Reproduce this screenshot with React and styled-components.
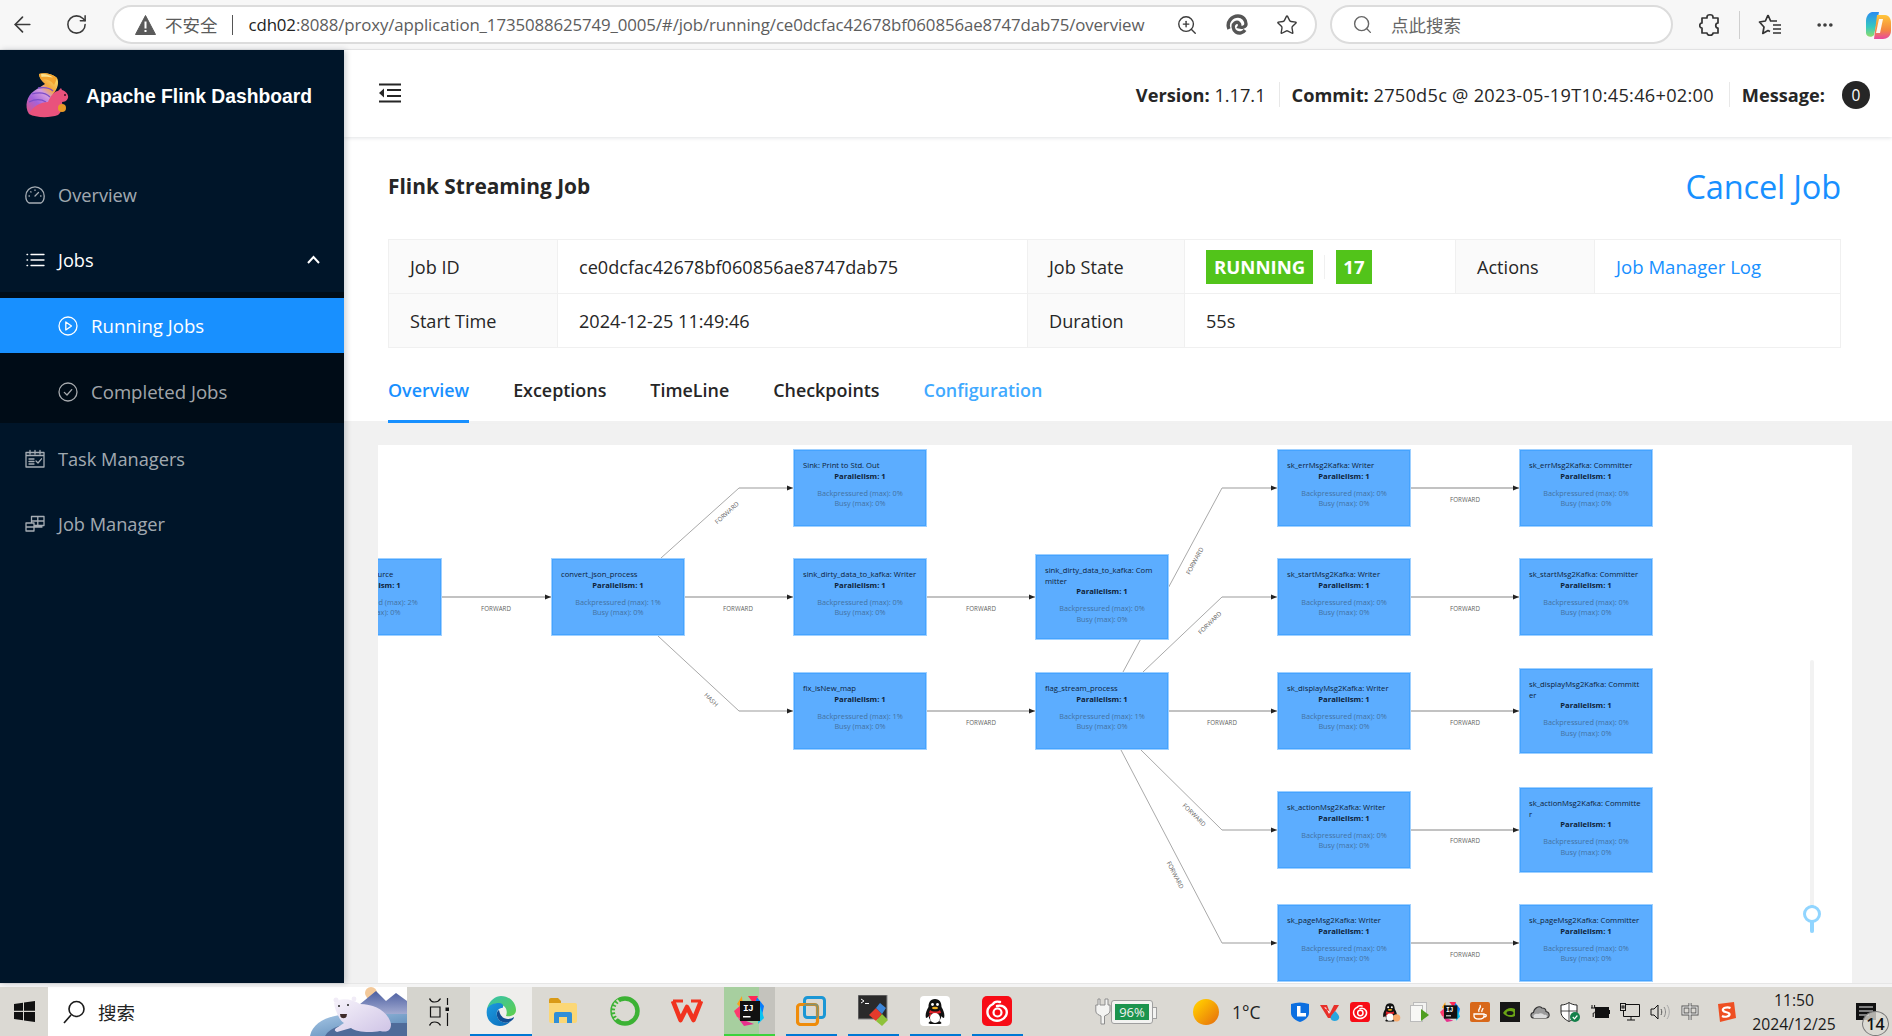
import React from "react";
import styled, { createGlobalStyle } from "styled-components";
import { ArrowLeft, RotateCw, ZoomIn, Star, Search, MoreHorizontal } from "lucide-react";

const UI = `"Open Sans", "Noto Sans CJK SC", sans-serif`;
const CJK = `"Noto Sans CJK SC", sans-serif`;

const Global = createGlobalStyle`
  html, body { margin: 0; padding: 0; height: 100%; overflow: hidden; background: #fff; }
  * { box-sizing: border-box; }
  #root { height: 1036px; }
`;

const Page = styled.div`
  width: 1892px; height: 1036px; display: flex; flex-direction: column; overflow: hidden;
  font-family: ${UI}; color: #262626; background: #fff;
`;

/* ---------- browser chrome ---------- */
const BrowserBar = styled.div`
  height: 50px; flex: none; background: #f7f7f7; display: flex; align-items: center; position: relative;
  border-bottom: 1px solid #e9e9e9; color: #333;
`;
const ChromeBtn = styled.span`
  flex: none; width: ${p => p.$w || 32}px; margin-left: ${p => p.$ml || 0}px; display: flex; align-items: center; justify-content: center; color: #3b3b3b;
`;
const AddressPill = styled.div`
  flex: none; width: 1205px; height: 39px; margin-left: 23px; background: #fff; border: 2px solid #dcdcdc; border-radius: 20px;
  display: flex; align-items: center; padding-left: 21px;
`;
const Insecure = styled.span`
  margin-left: 9px; font-family: ${CJK}; font-size: 17.5px; color: #5b5b5b; letter-spacing: 0;
`;
const AddrSep = styled.span`
  width: 1px; height: 20px; background: #555; margin: 0 16px 0 14px;
`;
const Url = styled.span`
  flex: none; width: 895px; font-size: 16.85px; color: #5d5d5d; white-space: nowrap; letter-spacing: -.12px;
  & b { font-weight: 400; color: #222; }
`;
const SearchPill = styled.div`
  flex: none; width: 343px; height: 39px; margin-left: 13px; background: #fff; border: 2px solid #dcdcdc; border-radius: 20px;
  display: flex; align-items: center; padding-left: 20px; font-family: ${CJK}; font-size: 17.5px; color: #666;
  & span { margin-left: 18px; }
`;
const ChromeDivider = styled.span`
  flex: none; width: 1px; height: 28px; background: #cfcfcf; margin-left: ${p => p.$ml}px;
`;

/* ---------- layout ---------- */
const Body = styled.div`
  flex: none; height: 933px; display: flex;
`;
const Sidebar = styled.aside`
  flex: none; width: 344px; background: #001529; color: rgba(255,255,255,.65); position: relative; z-index: 2;
  box-shadow: 2px 0 6px rgba(0,21,41,.2); display: flex; flex-direction: column;
`;
const Brand = styled.div`
  height: 92px; flex: none; display: flex; align-items: center; padding-left: 20px;
  & svg { margin-bottom: 8px; }
  & h1 { margin: 2px 0 0 10px; font: 700 19.3px "Liberation Sans", Arial, sans-serif; color: #fff; white-space: nowrap; }
`;
const Menu = styled.nav`
  margin-top: 25px; display: flex; flex-direction: column;
`;
const MenuItem = styled.div`
  height: 55px; flex: none; display: flex; align-items: center; padding-left: 25px; font-size: 18.2px;
  color: ${p => (p.$on ? "#fff" : "rgba(255,255,255,.65)")};
  margin-bottom: ${p => p.$mb ?? 10}px;
  & > svg:first-child { margin-right: 13px; flex: none; }
`;
const Chevron = styled.span`
  margin-left: auto; margin-right: 24px; display: flex;
`;
const SubMenu = styled.div`
  background: #000c17; padding-top: 6px; display: flex; flex-direction: column; height: 131px; flex: none; margin-bottom: 8px;
`;
const SubItem = styled.div`
  height: 55px; flex: none; display: flex; align-items: center; padding-left: 58px; font-size: 18.6px; margin-bottom: 11px;
  background: ${p => (p.$on ? "#1890ff" : "transparent")};
  color: ${p => (p.$on ? "#fff" : "rgba(255,255,255,.65)")};
  & svg { margin-right: 13px; flex: none; }
`;
const Main = styled.main`
  flex: 1; min-width: 0; display: flex; flex-direction: column; background: #f1f1f1; position: relative;
`;
const Header = styled.header`
  flex: none; height: 87px; background: #fff; box-shadow: 0 1px 4px rgba(0,21,41,.12); position: relative; z-index: 1;
  display: flex; align-items: center; padding: 0 22px 0 34px;
`;
const FoldWrap = styled.span`
  display: flex; margin-bottom: 2px;
`;
const StatusGroup = styled.div`
  margin-left: auto; display: flex; align-items: center; font-size: 18.2px; color: #262626; white-space: nowrap; padding-top: 2px;
  & b { font-weight: 700; }
`;
const CommitValue = styled.span`
  letter-spacing: .26px;
`;
const StatusDivider = styled.span`
  width: 1px; height: 25px; background: #e8e8e8; margin: 0 12px 0 ${p => p.$left}px;
`;
const Badge = styled.span`
  width: 28px; height: 28px; margin-left: 17px; border-radius: 50%; background: #262626; color: #fff; font-size: 15.5px;
  display: flex; align-items: center; justify-content: center;
`;
const JobPanel = styled.section`
  flex: none; height: 284px; background: #fff; padding: 0 51px 0 44px; display: flex; flex-direction: column;
`;
const TitleRow = styled.div`
  height: 102px; flex: none; display: flex; align-items: center; justify-content: space-between;
  & h2 { margin: 0 0 4px; font-size: 20.9px; font-weight: 700; color: #262626; }
`;
const CancelLink = styled.a`
  font-size: 32.6px; color: #1890ff; margin-bottom: 3px; letter-spacing: -.2px;
`;
const InfoTable = styled.div`
  display: grid; grid-template-columns: 169px 470px 157px 271px 139px 1fr; grid-template-rows: 54px 53px;
  border: 1px solid #f0f0f0; font-size: 18.1px; flex: none;
`;
const LabelCell = styled.div`
  background: #fafafa; display: flex; align-items: center; padding-left: 21px;
  border-right: 1px solid #f0f0f0; border-bottom: ${p => (p.$last ? 0 : "1px solid #f0f0f0")};
`;
const ValueCell = styled.div`
  display: flex; align-items: center; padding-left: 21px; grid-column: span ${p => p.$span || 1};
  border-right: ${p => (p.$end ? 0 : "1px solid #f0f0f0")}; border-bottom: ${p => (p.$last ? 0 : "1px solid #f0f0f0")};
`;
const StateTag = styled.span`
  height: 34px; padding: 0 ${p => p.$pad}px; background: #52c41a; color: #fff; font-weight: 700; font-size: 18.6px; display: flex; align-items: center;
`;
const TagGap = styled.span`
  width: 1px; height: 24px; background: #f0f0f0; margin: 0 11px;
`;
const LogLink = styled.a`
  color: #1890ff; font-size: 18.6px;
`;
const Tabs = styled.div`
  flex: 1; display: flex; gap: 44px; border-bottom: 1px solid #f0f0f0;
`;
const Tab = styled.div`
  height: 75px; display: flex; align-items: center; font-size: 17.9px; font-weight: 600; padding-top: 11px;
  color: ${p => p.$color || "#262626"};
  border-bottom: ${p => (p.$on ? "3px solid #1890ff" : "3px solid transparent")};
`;
const GraphArea = styled.div`
  flex: 1; min-height: 0; padding: 24px 40px 0 34px; display: flex;
`;
const Canvas = styled.div`
  flex: 1; position: relative; background: #fff; overflow: hidden;
`;
const EdgeLayer = styled.svg`
  position: absolute; left: 0; top: 0; width: 1474px; height: 538px;
`;
const EdgeLabel = styled.text`
  font-family: ${UI}; font-size: 6.2px; fill: #5f5f5f;
`;
const Node = styled.div`
  position: absolute; width: 134px; background: #5cadff; border: 1px solid #9fd0ff; box-shadow: inset 0 0 0 1px #45a3ff;
  padding: 10px 9px 0; font-size: 7.7px; line-height: 10.6px; text-align: center; color: #0e2238; overflow: hidden;
`;
const NodeTitle = styled.div`
  text-align: left; white-space: pre-line;
`;
const NodeParallel = styled.div`
  font-weight: 700; margin-bottom: 6.5px; white-space: nowrap;
`;
const NodeMuted = styled.div`
  color: #44729f; white-space: nowrap; font-size: 7.3px;
`;
const SliderTrack = styled.div`
  position: absolute; left: 1432px; top: 215px; width: 4px; height: 273px; background: #f2f2f2; border-radius: 2px;
`;
const SliderFill = styled.div`
  position: absolute; left: 0; bottom: 0; width: 4px; height: 28px; background: #91d5ff; border-radius: 2px;
`;
const SliderHandle = styled.div`
  position: absolute; left: -7px; top: 245px; width: 18px; height: 18px; border-radius: 50%; background: #fff; border: 3px solid #91d5ff;
`;
const Strip = styled.div`
  flex: none; height: 4px; background: #f4f4f4; border-top: 1px solid #e6e6e6;
`;

/* ---------- taskbar ---------- */
const Taskbar = styled.footer`
  flex: none; height: 49px; background: #dbd9d3; display: flex; align-items: center; position: relative; color: #111;
  & > * { flex: none; }
`;
const StartBtn = styled.div`
  width: 48px; height: 100%; display: flex; align-items: center; justify-content: center;
`;
const TaskSearch = styled.div`
  width: 359px; height: 100%; background: #fff; display: flex; align-items: center; padding-left: 14px; font-family: ${CJK}; font-size: 18.5px; color: #222;
  & span { margin-left: 12px; }
  & svg:last-child { margin-left: auto; }
`;
const TaskView = styled.div`
  width: 63px; height: 100%; display: flex; align-items: center; justify-content: center; background: #d5d4ce;
`;
const TileSlot = styled.div`
  width: 62px; height: 100%; padding: 0 ${p => (p.$full ? 0 : 5.5)}px;
`;
const Tile = styled.div`
  height: 100%; display: flex; align-items: center; justify-content: center; position: relative; background: ${p => p.$bg || "transparent"};
  border-bottom: 2px solid ${p => p.$line || "transparent"};
`;
const TileHalf = styled.div`
  position: absolute; right: 0; top: 0; bottom: 0; width: 16px; background: #c4c3bd;
`;
const IconOver = styled.span`
  position: relative; display: flex;
`;
const Power = styled.div`
  margin-left: 67px; display: flex; align-items: center;
`;
const BatteryBody = styled.div`
  width: 42px; height: 24px; background: #f3f3f1; border: 1px solid #9f9f9f; border-radius: 3px; padding: 3px; margin-right: 3px; position: relative;
  & div { height: 100%; background: #1c944e; color: #f2f2f2; font-size: 13px; line-height: 16px; text-align: center; }
  &::after { content: ""; position: absolute; right: -5px; top: 6px; width: 3px; height: 10px; background: #f3f3f1; border: 1px solid #9f9f9f; border-left: 0; }
`;
const Weather = styled.div`
  margin-left: 37px; width: 69px; display: flex; align-items: center; font-size: 17.5px; color: #222; white-space: nowrap;
  & i { display: block; flex: none; width: 26px; height: 26px; border-radius: 50%; background: linear-gradient(135deg, #ffc400 20%, #e8760c 90%); margin-right: 13px; }
`;
const Tray = styled.div`
  margin-left: 23px; display: flex; align-items: center;
`;
const TraySlot = styled.div`
  width: 30px; flex: none; display: flex; align-items: center; justify-content: center; margin-left: ${p => p.$ml || 0}px;
`;
const Clock = styled.div`
  margin-left: 8px; width: 90px; display: flex; flex-direction: column; align-items: center; font-size: 15.7px; line-height: 24px; color: #1a1a1a;
`;
const Notify = styled.div`
  margin-left: 14px; width: 36px; height: 100%; position: relative;
  & > svg { position: absolute; left: 3px; top: 16px; }
`;
const NotifyCount = styled.span`
  position: absolute; left: 9px; top: 24px; width: 27px; height: 25px; border-radius: 50%; border: 1px solid #777; background: #dbd9d3cc; color: #111;
  font-size: 16px; font-weight: 600; display: flex; align-items: center; justify-content: center;
`;

/* ---------- icons ---------- */
const Warn = () => (
  <svg width="21" height="20" viewBox="0 0 21 20"><path d="M10.5 0.5 L20.5 19.5 H0.5 Z" fill="#5a5a5a" stroke="#5a5a5a" strokeLinejoin="round" /><rect x="9.5" y="6.5" width="2" height="7" fill="#fff" /><rect x="9.5" y="15" width="2" height="2" fill="#fff" /></svg>
);
const EdgeMini = () => (
  <svg width="22" height="22" viewBox="0 0 22 22" fill="none" stroke="#555"><path d="M3 15 C0 8 6 2 12 2 C17 2 20 6 20 10 C20 13 16 14 13 13 C15 10 12 7 9 9 C6 11 7 16 10 18 C13 20 17 19 19 16" strokeWidth="3.4" /></svg>
);
const PuzzleIcon = () => (
  <svg width="22" height="24" viewBox="0 0 22 24" fill="none" stroke="#333" strokeWidth="1.7" strokeLinejoin="round"><path d="M8 4 C8 1 14 1 14 4 V5 H19 V10 C16 10 16 15 19 15 V20 H14 C14 23 8 23 8 20 H3 V15 C0 15 0 10 3 10 V5 H8 Z" /></svg>
);
const FavIcon = () => (
  <svg width="24" height="24" viewBox="0 0 24 24" fill="none" stroke="#333" strokeWidth="1.7" strokeLinejoin="round"><path d="M10 2 L12.6 8 H19 M10 2 L7.4 8 L1.5 9 L6 14 L4.8 20.5 L10 17.5 L12 18.6 M15 12 H23 M15 16 H23 M15 20 H23" /></svg>
);
const Copilot = () => (
  <svg width="26" height="28" viewBox="0 0 26 28"><defs><linearGradient id="cop" x1="0" y1="0" x2="0" y2="1"><stop offset="0" stopColor="#2a8cf0" /><stop offset=".6" stopColor="#36c8c0" /><stop offset="1" stopColor="#8fdc6a" /></linearGradient><linearGradient id="cop2" x1="0" y1="0" x2="0" y2="1"><stop offset="0" stopColor="#ffc53a" /><stop offset=".6" stopColor="#f58a3c" /><stop offset="1" stopColor="#e848a0" /></linearGradient></defs><path d="M7 1 H14 L9 24 C7 27 1 26 1 22 V10 C1 6 3 2 7 1 Z" fill="url(#cop)" /><path d="M12 4 H20 C24 4 26 8 26 12 V20 C26 25 22 28 18 28 H9 Z" fill="url(#cop2)" /><path d="M14 8 L11 22 H15 L18 8 Z" fill="#fff" opacity=".92" /></svg>
);
const FlinkLogo = () => (
  <svg width="56" height="56" viewBox="0 0 56 56">
    <defs>
      <linearGradient id="tail" x1="0" y1="1" x2=".7" y2="0"><stop offset="0" stopColor="#e8507a" /><stop offset=".35" stopColor="#a263dc" /><stop offset=".6" stopColor="#d39ae0" /><stop offset=".78" stopColor="#f4a83a" /><stop offset="1" stopColor="#f7d86a" /></linearGradient>
    </defs>
    <path d="M9 50 C4 42 7 32 14 27 C18 24 22 22 25 20 C21 17 19 13 19 10 C24 8 33 10 37 14 C39 18 38 24 34 29 C30 35 28 40 26 45 Z" fill="url(#tail)" />
    <path d="M19 10 C24 8 33 10 37 14 C36 17 35 19 34 21 C31 16 25 14 22 16 C20 14 19 12 19 10 Z" fill="#f3a52f" />
    <path d="M21 10 C25 9.5 30 11 33 13.5 C28 12.5 24 12.5 21.5 13 Z" fill="#fbe28e" />
    <path d="M12 30 C19 28 26 29 30 33 M9 38 C15 35 21 35 26 38 M18 24 C24 23 30 24 33 27" stroke="#7d4ec8" strokeWidth="1.3" fill="none" />
    <path d="M9 50 C13 42 21 38 28 38 C30 33 34 27 38 27 L41 24 L42 26 C46 27 49 31 48 34 C47 37 44 38 42 38 C43 42 42 48 38 51 C30 54 16 54 9 50 Z" fill="#e9527c" />
    <circle cx="42" cy="44" r="4" fill="#e99a28" /><circle cx="45" cy="31" r="1" fill="#3b0f20" />
  </svg>
);
const NavSvg = ({ children, w = 20, color = "currentColor" }) => (
  <svg width={w} height="20" viewBox="0 0 20 20" fill="none" stroke={color} strokeWidth="1.3" strokeLinecap="round" strokeLinejoin="round">{children}</svg>
);
const GaugeIco = () => <NavSvg><path d="M4 18 C1.5 16.5 .8 13.5 .8 11 a9.2 9.2 0 0 1 18.4 0 C19.2 13.5 18.5 16.5 16 18 Z" /><path d="M10 11 L13.5 7.5" /><path d="M4 11 H4.4 M5.8 6.8 L6 7 M10 5 V5.4 M16 11 H15.6" /></NavSvg>;
const ListIco = () => <NavSvg><path d="M6 4.5 H19 M6 10 H19 M6 15.5 H19 M2 4.5 H2.6 M2 10 H2.6 M2 15.5 H2.6" /></NavSvg>;
const PlayIco = () => <NavSvg><circle cx="10" cy="10" r="9" /><path d="M7.8 6 L13.5 10 L7.8 14 Z" /></NavSvg>;
const CheckIco = () => <NavSvg><circle cx="10" cy="10" r="9" /><path d="M6.3 10.4 L9 13 L13.7 7.6" /></NavSvg>;
const ScheduleIco = () => <NavSvg><path d="M1 3.5 H19 V18 H1 Z M5 1.5 V5 M10 1.5 V5 M15 1.5 V5 M1 6.5 H19 M4 10 H9 M4 12.5 H9 M4 15 H9 M11 12 L13 14 L16.5 9.8" /></NavSvg>;
const ClusterIco = () => <NavSvg><path d="M1 9 H9 V17 H1 Z M1 13 H17 M9 9 V17 M6.5 9 V2.5 H19 V11.5 H9 M12.8 2.5 V11.5 M6.5 7 H19" /></NavSvg>;
const FoldIco = () => (
  <svg width="24" height="20" viewBox="0 0 24 20" fill="none" stroke="#262626" strokeWidth="2.2"><path d="M1 1.5 H23 M9 7 H23 M9 13 H23 M1 18.5 H23" /><path d="M6 5.5 V14.5 L1 10 Z" fill="#262626" stroke="none" /></svg>
);
const WinLogo = () => (
  <svg width="21" height="21" viewBox="0 0 21 21" fill="#111"><path d="M0 3 L9 1.7 V9.7 H0 Z M10 1.5 L21 0 V9.7 H10 Z M0 11 H9 V19.2 L0 18 Z M10 11 H21 V21 L10 19.4 Z" /></svg>
);
const GlassIco = () => (
  <svg width="24" height="24" viewBox="0 0 24 24" fill="none" stroke="#1a1a1a" strokeWidth="1.6"><circle cx="14.5" cy="9" r="7.5" /><path d="M9 15 L2 23" /></svg>
);
const Bear = () => (
  <svg width="97" height="49" viewBox="0 0 97 49">
    <defs>
      <linearGradient id="snow" x1="0" y1="0" x2="1" y2="1"><stop offset="0" stopColor="#a8c8e6" /><stop offset="1" stopColor="#4f7fb0" /></linearGradient>
      <linearGradient id="hill" x1="0" y1="0" x2="0" y2="1"><stop offset="0" stopColor="#4b5ea0" /><stop offset="1" stopColor="#c4c8e4" /></linearGradient>
      <linearGradient id="fur" x1="0" y1="0" x2="1" y2="1"><stop offset="0" stopColor="#f6f2fa" /><stop offset="1" stopColor="#cfc4e6" /></linearGradient>
    </defs>
    <circle cx="61" cy="6" r="6" fill="#f3c99a" />
    <path d="M44 22 L66 4 L76 14 L86 6 L97 14 V36 H44 Z" fill="url(#hill)" />
    <path d="M0 49 C3 34 20 28 40 27 H97 V49 Z" fill="url(#snow)" />
    <path d="M15 49 C20 40 34 36 50 36 H97 V49 Z" fill="#4f6b99" />
    <path d="M24 16 C30 10 42 12 50 17 C64 17 78 24 81 37 C81 43 78 46 70 44 C60 46 46 45 41 41 L27 45 C24 44 24 42 28 40 L34 36 C30 34 25 24 24 16 Z" fill="url(#fur)" />
    <circle cx="26" cy="13" r="2.5" fill="#f1ecf7" />
    <circle cx="44" cy="12" r="2.4" fill="#f1ecf7" />
    <path d="M30 27 a2.5 3 0 0 0 7 0 Z" fill="#3d2a2a" /><circle cx="29" cy="19" r="1" fill="#222" /><circle cx="38" cy="18" r="1" fill="#222" />
  </svg>
);
const TaskViewIco = () => (
  <svg width="20" height="28" viewBox="0 0 20 28" fill="none" stroke="#111" strokeWidth="1.2"><path d="M0 1 H1 C2 5 9 5 11 1 H12 M0 27 H1 C2 23 9 23 11 27 H12 M1.5 9 H11 V19 H1.5 Z M18.5 0 V7 M18.5 15 V28" /><rect x="16.5" y="9.5" width="4" height="3.5" fill="#111" stroke="none" /></svg>
);
const EdgeIco = () => (
  <svg width="30" height="30" viewBox="0 0 30 30">
    <defs>
      <linearGradient id="eg1" x1="0" y1="0" x2="1" y2="1"><stop offset="0" stopColor="#35c1b0" /><stop offset="1" stopColor="#5fd04a" /></linearGradient>
      <linearGradient id="eg2" x1="0" y1="0" x2="1" y2="1"><stop offset="0" stopColor="#1d9be0" /><stop offset="1" stopColor="#0a6ab8" /></linearGradient>
    </defs>
    <path d="M1 13 C3 4 10 0 15 0 C24 0 30 7 30 14 C30 19 25 21 20 20 C22 15 20 9 14 9 C6 9 4 13 1 13 Z" fill="url(#eg1)" />
    <path d="M1 13 C3 9 8 7 13 7 C17 7 18 10 16.5 12 C12 12 10 16 11 20 C12 25 19 29 25 25 C22 28 18 30 14 30 C6 30 -1 23 1 13 Z" fill="url(#eg2)" />
    <path d="M11 20 C12 25 19 29 25 25 C27 24 28 22 28 21 C24 24 15 25 13 14 C11 15 10.5 18 11 20 Z" fill="#0f4c93" />
  </svg>
);
const FolderIco = () => (
  <svg width="28" height="25" viewBox="0 0 28 25"><path d="M0 2 a2 2 0 0 1 2 -2 H9 L12 3 V8 H0 Z" fill="#d99a16" /><path d="M0 5 H26 a2 2 0 0 1 2 2 V23 a2 2 0 0 1 -2 2 H2 a2 2 0 0 1 -2 -2 Z" fill="#fbd776" /><path d="M5 25 V16 a2 2 0 0 1 2 -2 H21 a2 2 0 0 1 2 2 V25 H18 V19 H10 V25 Z" fill="#2f8fd8" /></svg>
);
const RingIco = () => (
  <svg width="32" height="32" viewBox="0 0 32 32" fill="none"><circle cx="16" cy="16" r="12.5" stroke="#3cb234" strokeWidth="4.5" /><path d="M10 6 A12.5 12.5 0 0 0 8 24" stroke="#d8dcc8" strokeWidth="4.5" strokeDasharray="2 1.6" /></svg>
);
const WpsIco = () => (
  <svg width="32" height="24" viewBox="0 0 32 24" fill="none"><path d="M2 2 L9.5 21 L16 8 L22.5 21 L30 2" stroke="#f1331f" strokeWidth="4.6" strokeLinejoin="round" /><path d="M2 2 H12 M20 2 H30" stroke="#f1331f" strokeWidth="3" /></svg>
);
const IdeaIco = ({ s = 30 }) => (
  <svg width={s} height={s} viewBox="0 0 30 30">
    <path d="M8 0 L3 8 L9 14 Z" fill="#f9a11b" /><path d="M0 15 L7 9 L9 24 L3 21 Z" fill="#fd3a6e" /><path d="M4 22 L10 30 L20 28 Z" fill="#e7308d" />
    <path d="M22 0 L30 10 L27 24 L20 20 Z" fill="#087cfa" /><path d="M14 0 H24 L20 8 Z" fill="#fe2857" /><path d="M26 10 L30 22 L24 28 Z" fill="#07c3f2" />
    <rect x="6" y="5" width="20" height="20" fill="#111" />
    <text x="9" y="15" fontFamily="Liberation Mono, monospace" fontWeight="700" fontSize="9.5" fill="#fff" letterSpacing="-.6">IJ</text>
    <rect x="9" y="20" width="7.5" height="1.5" fill="#fff" />
  </svg>
);
const VmIco = () => (
  <svg width="30" height="30" viewBox="0 0 30 30" fill="none"><rect x="8.5" y="1.5" width="20" height="20" rx="3" stroke="#1b97d5" strokeWidth="3" /><rect x="1.5" y="8.5" width="20" height="20" rx="3" stroke="#ef8c0a" strokeWidth="3.2" /><rect x="8.5" y="8.5" width="13" height="13" rx="2" stroke="#1b97d5" strokeWidth="2" opacity=".5" /></svg>
);
const TermIco = () => (
  <svg width="30" height="31" viewBox="0 0 30 31"><rect x="0" y="0" width="29" height="24" fill="#2a2a2a" stroke="#8a8a8a" /><path d="M3 4 L6 6 L3 8" stroke="#fff" fill="none" /><rect x="7" y="8" width="4" height="1" fill="#fff" /><path d="M11 20 L18 13 L24 19 L18 26 Z" fill="#e33a2c" /><path d="M18 13 L22 8 L28 13 L24 19 Z" fill="#3d86d8" /><path d="M18 26 L24 19 L30 25 L24 31 Z" fill="#8fc23a" /></svg>
);
const QQIco = ({ s = 30, tile = true }) => (
  <svg width={s} height={s} viewBox="0 0 30 30">
    {tile && <rect width="30" height="30" rx="4" fill="#fff" />}
    <path d="M15 3 C10 3 8.5 7 8.5 11 C6 15 5 19 6 22 C7 22 8 21 8.5 20 C9 23 11 25 11 25 C8 26 8 28 10 28 H20 C22 28 22 26 19 25 C19 25 21 23 21.5 20 C22 21 23 22 24 22 C25 19 24 15 21.5 11 C21.5 7 20 3 15 3 Z" fill="#111" />
    <path d="M10 14 C13 16 18 16 20 14 L21 17 C18 18 12 18 9 17 Z" fill="#e3242b" /><path d="M10 17 L9 21 L12 20 Z" fill="#e3242b" />
    <ellipse cx="15" cy="22" rx="5" ry="5" fill="#fff" /><circle cx="12.5" cy="8.5" r="1.4" fill="#fff" /><circle cx="17.5" cy="8.5" r="1.4" fill="#fff" /><ellipse cx="15" cy="12" rx="3" ry="1.2" fill="#f0b020" />
    {!tile && <circle cx="24" cy="23" r="5" fill="#f7a86a" />}
  </svg>
);
const NetEase = ({ s = 30 }) => (
  <svg width={s} height={s} viewBox="0 0 30 30"><rect width="30" height="30" rx="5" fill="#f80c16" /><circle cx="15.5" cy="16.5" r="4" fill="none" stroke="#fff" strokeWidth="2.2" /><path d="M18 6 C14 5 12 6 11 8 C6 10 4.5 15 6 19 C8 24 14 26 19 24 C24 22 26 17 24 13 C22 10 18 9 15 10" fill="none" stroke="#fff" strokeWidth="2.4" strokeLinecap="round" /></svg>
);
const PlugIco = () => (
  <svg width="16" height="27" viewBox="0 0 16 27" fill="#f4f4f2" stroke="#8d8d8d"><path d="M3 1 H5 V7 H10 V1 H13 V7 H15 V13 C15 16 11 17 9.5 18 V26 H6 V18 C4 17 .8 16 .8 13 V7 H3 Z" /></svg>
);
const LShield = () => <svg width="18" height="20" viewBox="0 0 18 20"><path d="M0 2 Q9 -1 18 2 V11 C18 16 12 19 9 20 C6 19 0 16 0 11 Z" fill="#0c6fe0" /><path d="M6 4 H9.5 V11 H15 V14.5 H6 Z" fill="#fff" /></svg>;
const VsTray = () => <svg width="20" height="20" viewBox="0 0 20 20"><path d="M0 3 H7 L10 11 L14 3 H19 L11 16 H8 Z" fill="#e8302a" /><path d="M4 5.5 H6 L9 12 L10 10 Z" fill="#fff" /><path d="M15 9 C18 12 21 15 18 18 C15 20 11 19 10.5 16 C11 13 13 12 15 9 Z" fill="#29a7df" /></svg>;
const CopyPlay = () => <svg width="20" height="20" viewBox="0 0 20 20"><rect x="3.5" y=".5" width="13" height="14" fill="#f2f2f0" stroke="#bbb" /><rect x=".5" y="3.5" width="12" height="16" fill="#f7f7f5" stroke="#bbb" /><path d="M11 7 L19 13 L11 19 Z" fill="#4f9e20" /></svg>;
const JavaIco = () => <svg width="20" height="20" viewBox="0 0 20 20"><rect width="20" height="20" rx="2" fill="#d8681a" /><path d="M4 12 H14 V14 C14 16 12 17 9 17 C6 17 4 16 4 14 Z M14 12.5 C17 12 17 15 14 15" fill="none" stroke="#fff" strokeWidth="1.3" /><path d="M10 3 C12 6 7 7 9 10 M13 6 C13 8 11 8 12 10" fill="none" stroke="#fff" strokeWidth="1.3" /></svg>;
const NvIco = () => <svg width="20" height="20" viewBox="0 0 20 20"><rect width="20" height="20" fill="#161616" /><path d="M3 11 C6 6 11 5 15 7 V14 C12 16 6 15 3 11 Z" fill="#6ba415" /><ellipse cx="10" cy="11" rx="3.5" ry="2" fill="#161616" /></svg>;
const CloudIco = () => <svg width="20" height="14" viewBox="0 0 20 14"><path d="M4 13 C0 13 0 8 3.5 7.5 C4 3 9 0 12 3 C15 3 16 5 16 6.5 C20 7 20.5 13 16 13 Z" fill="#9b9b9b" stroke="#333" strokeWidth="1.1" /><path d="M4 13 C2 11 5 8 8 9 C11 7 14 9 14 10 C17 9 18 12 16 13 Z" fill="#dcdcdc" /></svg>;
const ShieldIco = () => <svg width="20" height="20" viewBox="0 0 20 20"><path d="M9 .5 C11 2 14 3 17 3 V10 C17 15 12 18 9 19.5 C6 18 1 15 1 10 V3 C4 3 7 2 9 .5 Z" fill="#fff" stroke="#222" /><path d="M1 9 H17 M9 1 V19" stroke="#222" strokeWidth=".8" /><circle cx="15" cy="15" r="5" fill="#14804a" /><path d="M12.8 15 L14.5 16.8 L17.4 13.5" fill="none" stroke="#fff" strokeWidth="1.2" /></svg>;
const BattTray = () => <svg width="20" height="16" viewBox="0 0 20 16"><rect x="5.5" y="3.5" width="13" height="10" fill="#111" stroke="#111" /><rect x="18.5" y="6" width="1.5" height="4" fill="#111" /><path d="M2 1 V4 M4.6 1 V4 M1 4 H5.5 V7 C5.5 9 3.5 9 3.2 9 V13" fill="none" stroke="#111" /></svg>;
const MonitorIco = () => <svg width="20" height="18" viewBox="0 0 20 18" fill="none" stroke="#111"><path d="M3.5 1.5 H19.5 V13.5 H3.5 M11 13.5 V17 M7 17 H15 M3.5 13.5 V8" /><rect x=".5" y=".5" width="5" height="7" fill="#dbd9d3" /><rect x="2" y="3" width="2" height="2" /></svg>;
const SoundIco = () => <svg width="20" height="16" viewBox="0 0 20 16" fill="none" stroke="#111"><path d="M1 5 H4 L8 1 V15 L4 11 H1 Z" /><path d="M11 5 C12 7 12 9 11 11" stroke="#555" /><path d="M14 3 C16 6 16 10 14 13" stroke="#888" /><path d="M17 1 C20 5 20 11 17 15" stroke="#aaa" /></svg>;
const ImeIco = () => <svg width="18" height="19" viewBox="0 0 18 19" fill="none" stroke="#555" strokeWidth="3"><path d="M2 5 H16 V12 H2 Z M9 1 V18" /><path d="M2 5 H16 V12 H2 Z M9 1 V18" stroke="#f4f4f2" strokeWidth="1.2" /></svg>;
const SogouIco = () => <svg width="20" height="20" viewBox="0 0 20 20"><path d="M2 2 L18 0 L20 16 L4 20 Z" fill="#ee4f22" /><path d="M14.5 6 C11 4.5 6 6 7 8.5 C8 11 13 9.5 13.5 12 C14 14.5 9 15.5 6 14" fill="none" stroke="#fff" strokeWidth="2.2" /></svg>;
const NotifyIco = () => <svg width="20" height="17" viewBox="0 0 20 17"><rect width="20" height="17" fill="#111" /><path d="M3 4 H17 M3 8 H17 M3 12 H13" stroke="#eee" strokeWidth="1" /></svg>;

/* ---------- graph data (page coordinates) ---------- */
const OX = 378, OY = 445;
const nodes = [
  { x: 308, y: 558, h: 78, t: "Source: Kafka Source", b: 2, u: 0 },
  { x: 551, y: 558, h: 78, t: "convert_json_process", b: 1, u: 0 },
  { x: 793, y: 449, h: 78, t: "Sink: Print to Std. Out", b: 0, u: 0 },
  { x: 793, y: 558, h: 78, t: "sink_dirty_data_to_kafka: Writer", b: 0, u: 0 },
  { x: 793, y: 672, h: 78, t: "fix_isNew_map", b: 1, u: 0 },
  { x: 1035, y: 554, h: 86, t: "sink_dirty_data_to_kafka: Com\nmitter", b: 0, u: 0 },
  { x: 1035, y: 672, h: 78, t: "flag_stream_process", b: 1, u: 0 },
  { x: 1277, y: 449, h: 78, t: "sk_errMsg2Kafka: Writer", b: 0, u: 0 },
  { x: 1277, y: 558, h: 78, t: "sk_startMsg2Kafka: Writer", b: 0, u: 0 },
  { x: 1277, y: 672, h: 78, t: "sk_displayMsg2Kafka: Writer", b: 0, u: 0 },
  { x: 1277, y: 791, h: 78, t: "sk_actionMsg2Kafka: Writer", b: 0, u: 0 },
  { x: 1277, y: 904, h: 78, t: "sk_pageMsg2Kafka: Writer", b: 0, u: 0 },
  { x: 1519, y: 449, h: 78, t: "sk_errMsg2Kafka: Committer", b: 0, u: 0 },
  { x: 1519, y: 558, h: 78, t: "sk_startMsg2Kafka: Committer", b: 0, u: 0 },
  { x: 1519, y: 668, h: 86, t: "sk_displayMsg2Kafka: Committ\ner", b: 0, u: 0 },
  { x: 1519, y: 787, h: 86, t: "sk_actionMsg2Kafka: Committe\nr", b: 0, u: 0 },
  { x: 1519, y: 904, h: 78, t: "sk_pageMsg2Kafka: Committer", b: 0, u: 0 },
];
const straight = [
  [442, 551, 597], [685, 793, 597], [927, 1035, 597], [927, 1035, 711], [1169, 1277, 711],
  [1411, 1519, 488], [1411, 1519, 597], [1411, 1519, 711], [1411, 1519, 830], [1411, 1519, 943],
];
const bent = [
  [661, 558, 739, 488, 793], [658, 636, 739, 711, 793],
  [1123, 672, 1222, 488, 1277], [1143, 672, 1222, 597, 1277],
  [1141, 750, 1222, 830, 1277], [1121, 750, 1222, 943, 1277],
];
const labels = [
  [496, 609, 0, "FORWARD"], [738, 609, 0, "FORWARD"], [981, 609, 0, "FORWARD"], [981, 723, 0, "FORWARD"],
  [1222, 723, 0, "FORWARD"], [1465, 500, 0, "FORWARD"], [1465, 609, 0, "FORWARD"], [1465, 723, 0, "FORWARD"],
  [1465, 841, 0, "FORWARD"], [1465, 955, 0, "FORWARD"], [727, 513, -42, "FORWARD"], [711, 700, 45, "HASH"],
  [1195, 561, -62, "FORWARD"], [1210, 623, -44, "FORWARD"], [1194, 815, 44, "FORWARD"], [1175, 875, 63, "FORWARD"],
];

const Graph = () => (
  <Canvas>
    <EdgeLayer viewBox={`${OX} ${OY} 1474 538`}>
      {bent.map(([x1, y1, x2, y2, x3], i) => (
        <g key={i} fill="none">
          <path d={`M${x1} ${y1} L${x2} ${y2}`} stroke="#a9a9a9" strokeWidth="1" />
          <path d={`M${x2} ${y2} H${x3}`} stroke="#bdbdbd" strokeWidth="1.6" />
          <path d={`M${x3 - 6} ${y2 - 2.5} L${x3} ${y2} L${x3 - 6} ${y2 + 2.5} Z`} fill="#222" />
        </g>
      ))}
      {straight.map(([x1, x2, y], i) => (
        <g key={i}>
          <path d={`M${x1} ${y} H${x2}`} stroke="#c2c2c2" strokeWidth="1.8" />
          <path d={`M${x2 - 6} ${y - 2.5} L${x2} ${y} L${x2 - 6} ${y + 2.5} Z`} fill="#222" />
        </g>
      ))}
      {labels.map(([x, y, r, s], i) => (
        <EdgeLabel key={i} x={x} y={y + 2} textAnchor="middle" transform={r ? `rotate(${r} ${x} ${y})` : undefined}>{s}</EdgeLabel>
      ))}
    </EdgeLayer>
    {nodes.map(n => (
      <Node key={n.t} style={{ left: n.x - OX, top: n.y - OY, height: n.h }}>
        <NodeTitle>{n.t}</NodeTitle>
        <NodeParallel>Parallelism: 1</NodeParallel>
        <NodeMuted>Backpressured (max): {n.b}%</NodeMuted>
        <NodeMuted>Busy (max): {n.u}%</NodeMuted>
      </Node>
    ))}
    <SliderTrack>
      <SliderFill />
      <SliderHandle />
    </SliderTrack>
  </Canvas>
);

export default function App() {
  return (
    <Page>
      <Global />
      <BrowserBar>
        <ChromeBtn $w={26} $ml={9}><ArrowLeft size={25} strokeWidth={1.6} /></ChromeBtn>
        <ChromeBtn $w={26} $ml={28}><RotateCw size={23} strokeWidth={1.6} /></ChromeBtn>
        <AddressPill>
          <Warn />
          <Insecure>不安全</Insecure>
          <AddrSep />
          <Url><b>cdh02</b>:8088/proxy/application_1735088625749_0005/#/job/running/ce0dcfac42678bf060856ae8747dab75/overview</Url>
          <ChromeBtn $w={22} $ml={32}><ZoomIn size={22} strokeWidth={1.5} /></ChromeBtn>
          <ChromeBtn $w={24} $ml={27}><EdgeMini /></ChromeBtn>
          <ChromeBtn $w={24} $ml={26}><Star size={22} strokeWidth={1.5} /></ChromeBtn>
        </AddressPill>
        <SearchPill>
          <Search size={21} strokeWidth={1.6} />
          <span>点此搜索</span>
        </SearchPill>
        <ChromeBtn $w={24} $ml={25}><PuzzleIcon /></ChromeBtn>
        <ChromeDivider $ml={17} />
        <ChromeBtn $w={24} $ml={18}><FavIcon /></ChromeBtn>
        <ChromeBtn $w={22} $ml={32}><MoreHorizontal size={20} strokeWidth={2.4} /></ChromeBtn>
        <ChromeBtn $w={26} $ml={29}><Copilot /></ChromeBtn>
      </BrowserBar>
      <Body>
        <Sidebar>
          <Brand>
            <FlinkLogo />
            <h1>Apache Flink Dashboard</h1>
          </Brand>
          <Menu>
            <MenuItem $mb={10}><GaugeIco />Overview</MenuItem>
            <MenuItem $on $mb={5}>
              <ListIco />Jobs
              <Chevron><svg width="13" height="9" viewBox="0 0 13 9" fill="none" stroke="#fff" strokeWidth="2"><path d="M1 8 L6.5 2 L12 8" /></svg></Chevron>
            </MenuItem>
            <SubMenu>
              <SubItem $on><PlayIco />Running Jobs</SubItem>
              <SubItem><CheckIco />Completed Jobs</SubItem>
            </SubMenu>
            <MenuItem><ScheduleIco />Task Managers</MenuItem>
            <MenuItem><ClusterIco />Job Manager</MenuItem>
          </Menu>
        </Sidebar>
        <Main>
          <Header>
            <FoldWrap><FoldIco /></FoldWrap>
            <StatusGroup>
              <span><b>Version:</b> 1.17.1</span>
              <StatusDivider $left={13} />
              <span><b>Commit:</b> <CommitValue>2750d5c @ 2023-05-19T10:45:46+02:00</CommitValue></span>
              <StatusDivider $left={15} />
              <b>Message:</b>
              <Badge>0</Badge>
            </StatusGroup>
          </Header>
          <JobPanel>
            <TitleRow>
              <h2>Flink Streaming Job</h2>
              <CancelLink>Cancel Job</CancelLink>
            </TitleRow>
            <InfoTable>
              <LabelCell>Job ID</LabelCell>
              <ValueCell>ce0dcfac42678bf060856ae8747dab75</ValueCell>
              <LabelCell>Job State</LabelCell>
              <ValueCell>
                <StateTag $pad={8}>RUNNING</StateTag>
                <TagGap />
                <StateTag $pad={7}>17</StateTag>
              </ValueCell>
              <LabelCell>Actions</LabelCell>
              <ValueCell $end><LogLink>Job Manager Log</LogLink></ValueCell>
              <LabelCell $last>Start Time</LabelCell>
              <ValueCell $last>2024-12-25 11:49:46</ValueCell>
              <LabelCell $last>Duration</LabelCell>
              <ValueCell $last $end $span={3}>55s</ValueCell>
            </InfoTable>
            <Tabs>
              <Tab $on $color="#1890ff">Overview</Tab>
              <Tab>Exceptions</Tab>
              <Tab>TimeLine</Tab>
              <Tab>Checkpoints</Tab>
              <Tab $color="#40a9ff">Configuration</Tab>
            </Tabs>
          </JobPanel>
          <GraphArea>
            <Graph />
          </GraphArea>
        </Main>
      </Body>
      <Strip />
      <Taskbar>
        <StartBtn><WinLogo /></StartBtn>
        <TaskSearch>
          <GlassIco />
          <span>搜索</span>
          <Bear />
        </TaskSearch>
        <TaskView><TaskViewIco /></TaskView>
        <TileSlot $full><Tile $bg="#efeeec" $line="#0078d4"><EdgeIco /></Tile></TileSlot>
        <TileSlot><Tile><FolderIco /></Tile></TileSlot>
        <TileSlot><Tile><RingIco /></Tile></TileSlot>
        <TileSlot><Tile><WpsIco /></Tile></TileSlot>
        <TileSlot><Tile $bg="#a7cf9f" $line="#3cd23c"><TileHalf /><IconOver><IdeaIco /></IconOver></Tile></TileSlot>
        <TileSlot><Tile $line="#0078d4"><VmIco /></Tile></TileSlot>
        <TileSlot><Tile $line="#0078d4"><TermIco /></Tile></TileSlot>
        <TileSlot><Tile $line="#0078d4"><QQIco /></Tile></TileSlot>
        <TileSlot><Tile $line="#0078d4"><NetEase /></Tile></TileSlot>
        <Power>
          <PlugIco />
          <BatteryBody><div>96%</div></BatteryBody>
        </Power>
        <Weather><i />1°C</Weather>
        <Tray>
          <TraySlot><LShield /></TraySlot>
          <TraySlot><VsTray /></TraySlot>
          <TraySlot><NetEase s={20} /></TraySlot>
          <TraySlot><QQIco s={22} tile={false} /></TraySlot>
          <TraySlot><CopyPlay /></TraySlot>
          <TraySlot><IdeaIco s={20} /></TraySlot>
          <TraySlot><JavaIco /></TraySlot>
          <TraySlot><NvIco /></TraySlot>
          <TraySlot><CloudIco /></TraySlot>
          <TraySlot><ShieldIco /></TraySlot>
          <TraySlot><BattTray /></TraySlot>
          <TraySlot><MonitorIco /></TraySlot>
          <TraySlot><SoundIco /></TraySlot>
          <TraySlot><ImeIco /></TraySlot>
          <TraySlot $ml={6}><SogouIco /></TraySlot>
        </Tray>
        <Clock><span>11:50</span><span>2024/12/25</span></Clock>
        <Notify><NotifyIco /><NotifyCount>14</NotifyCount></Notify>
      </Taskbar>
    </Page>
  );
}
